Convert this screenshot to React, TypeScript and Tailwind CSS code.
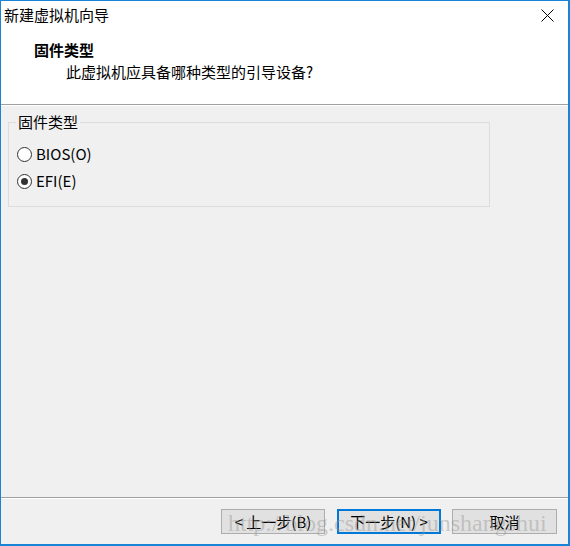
import React, { useState } from 'react';

const font = { fontFamily: '"Noto Sans CJK SC", "Noto Sans", sans-serif' };

type RadioProps = { label: string; checked: boolean; onSelect: () => void };

const Radio: React.FC<RadioProps> = ({ label, checked, onSelect }) => (
    <div className="flex items-center h-[20px] pl-[8px] cursor-default" onClick={onSelect}>
        <div className="w-[15px] h-[15px] rounded-full border border-[#333333] bg-white flex items-center justify-center">
            {checked && <div className="w-[7px] h-[7px] rounded-full bg-[#333333]" />}
        </div>
        <span className="ml-[4px] text-[15px] leading-[20px] text-black">{label}</span>
    </div>
);

const App: React.FC = () => {
    const [firmware, setFirmware] = useState<'bios' | 'efi'>('efi');

    return (
        <div
            className="relative w-[570px] h-[546px] flex flex-col bg-[#f0f0f0] border-l border-t border-r-2 border-b-2 border-[#1883d7] overflow-hidden select-none"
            style={font}
        >
            {/* Title bar + header */}
            <div className="bg-white flex flex-col">
                <div className="h-[28px] flex items-center justify-between pl-[3px]">
                    <span className="text-[15px] leading-[20px] text-black">新建虚拟机向导</span>
                    <svg width="13" height="13" viewBox="0 0 13 13" className="mr-[14px]">
                        <path d="M0.5 0.5 L12.5 12.5 M12.5 0.5 L0.5 12.5" stroke="#000" strokeWidth="1" />
                    </svg>
                </div>
                <div className="mt-[11px] pl-[33px] text-[15px] leading-[20px] font-bold text-black">固件类型</div>
                <div className="mt-[2px] pl-[65px] pb-[22px] text-[15px] leading-[20px] text-black">
                    此虚拟机应具备哪种类型的引导设备?
                </div>
            </div>
            <div className="h-px bg-[#a0a0a0]" />
            <div className="h-px bg-white" />

            {/* Body */}
            <div className="flex-1">
                <fieldset className="ml-[7px] mt-[6px] w-[482px] h-[95px] border border-[#dcdcdc]">
                    <legend className="ml-[7px] px-[2px] text-[15px] leading-[20px] text-black">固件类型</legend>
                    <div className="mt-[12px] flex flex-col gap-[7px]">
                        <Radio label="BIOS(O)" checked={firmware === 'bios'} onSelect={() => setFirmware('bios')} />
                        <Radio label="EFI(E)" checked={firmware === 'efi'} onSelect={() => setFirmware('efi')} />
                    </div>
                </fieldset>
            </div>

            {/* Footer */}
            <div className="h-px bg-[#a0a0a0]" />
            <div className="h-px bg-white" />
            <div className="flex justify-end pt-[10px] pb-[10px] pr-[11px]">
                <button className="w-[104px] h-[25px] bg-[#e1e1e1] border border-[#adadad] text-[15px] leading-[20px] text-black">
                    &lt; 上一步(B)
                </button>
                <button className="ml-[12px] w-[104px] h-[25px] bg-[#e1e1e1] border-2 border-[#0078d7] text-[15px] leading-[20px] text-black">
                    下一步(N) &gt;
                </button>
                <button className="ml-[11px] w-[105px] h-[25px] bg-[#e1e1e1] border border-[#adadad] text-[15px] leading-[20px] text-black">
                    取消
                </button>
            </div>

            {/* Watermark */}
            <div
                className="absolute left-[227px] top-[508px] text-[24px] leading-[28px] text-[rgba(150,150,150,0.45)] pointer-events-none whitespace-nowrap"
                style={{ fontFamily: '"Liberation Serif", serif' }}
            >
                http://blog.csdn.net/junshangshui
            </div>
        </div>
    );
};

export default App;
